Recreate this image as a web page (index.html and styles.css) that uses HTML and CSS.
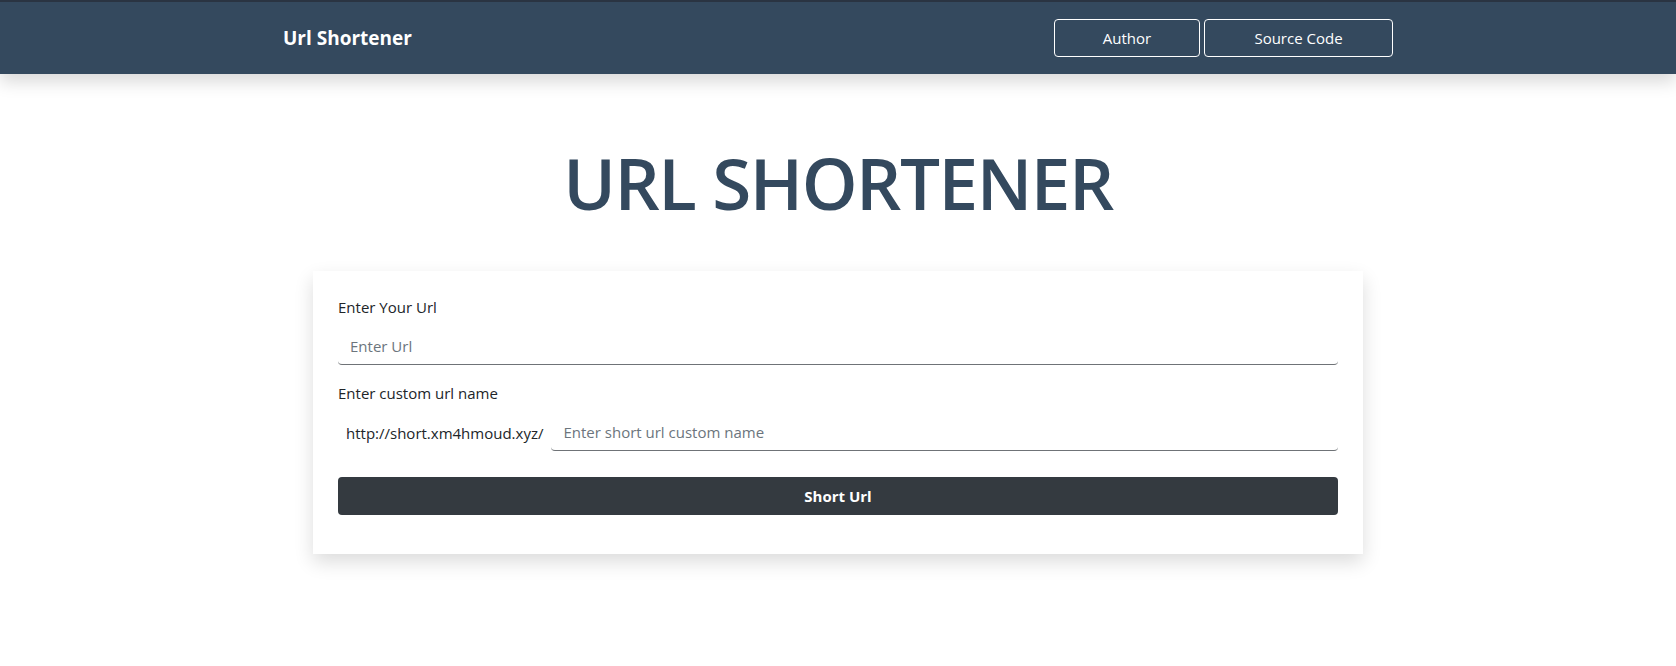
FILE: index.html
```html
<!DOCTYPE html>
<html lang="en">
<head>
<meta charset="utf-8">
<title>Url Shortener</title>
<link rel="stylesheet" href="styles.css">
</head>
<body>
<nav class="navbar">
  <div class="nav-inner">
    <a class="brand" href="#">Url Shortener</a>
    <div class="nav-buttons">
      <a class="nav-btn" href="#">Author</a>
      <a class="nav-btn" href="#">Source Code</a>
    </div>
  </div>
</nav>
<main class="main">
  <h1 class="title">URL SHORTENER</h1>
  <form class="card">
    <div class="form-group">
      <label class="label" for="url">Enter Your Url</label>
      <input class="input" id="url" type="text" placeholder="Enter Url">
    </div>
    <div class="form-group">
      <label class="label" for="custom">Enter custom url name</label>
      <div class="input-group">
        <span class="prefix">http://short.xm4hmoud.xyz/</span>
        <input class="input" id="custom" type="text" placeholder="Enter short url custom name">
      </div>
    </div>
    <button class="submit" type="button">Short Url</button>
  </form>
</main>
</body>
</html>
```
FILE: styles.css
```css
* { box-sizing: border-box; }
html, body { min-height: 100%; }
body {
  margin: 0;
  font-family: "Open Sans", "Noto Sans", sans-serif;
  font-size: 16px;
  line-height: 1.5;
  color: #212529;
  background: #fff;
}
.navbar {
  background: #34495e;
  border-top: 2px solid #2a3442;
  padding: 17px 0;
  box-shadow: 0 0.5rem 1rem rgba(0, 0, 0, 0.15);
  position: relative;
}
.nav-inner {
  max-width: 1110px;
  margin: 0 auto;
  display: flex;
  justify-content: space-between;
  align-items: center;
}
.brand {
  color: #fff;
  text-decoration: none;
  font-weight: 700;
  font-size: 19px;
  line-height: 30px;
}
.nav-buttons {
  display: flex;
  gap: 4px;
}
.nav-btn {
  display: block;
  color: #fff;
  text-decoration: none;
  border: 1px solid #fff;
  border-radius: 4px;
  padding: 6px 0;
  line-height: 24px;
  font-size: 15px;
  text-align: center;
}
.nav-btn:first-child { width: 146px; }
.nav-btn:last-child { width: 189px; }
.main {
  padding: 66px 0 100px;
}
.title {
  margin: 0 0 46px;
  text-align: center;
  font-size: 71px;
  line-height: 1.2;
  font-weight: 600;
  letter-spacing: -1.5px;
  color: #34495e;
}
.card {
  width: 1050px;
  margin: 0 auto;
  padding: 24px 25px 39px;
  background: #fff;
  box-shadow: 0 8px 18px rgba(0, 0, 0, 0.14);
}
.form-group {
  margin-bottom: 16px;
}
.label {
  display: block;
  margin-bottom: 8px;
  font-size: 15px;
  line-height: 24px;
}
.input {
  display: block;
  width: 100%;
  height: 38px;
  padding: 6px 12px;
  border: none;
  border-bottom: 1px solid #6f7377;
  border-radius: 4px;
  font-family: inherit;
  font-size: 15px;
  line-height: 24px;
  color: #495057;
  background: #fff;
  outline: none;
}
.input::placeholder { color: #6c757d; }
.input-group {
  display: flex;
  align-items: stretch;
}
.input-group .input {
  flex: 1;
  width: auto;
}
.prefix {
  padding: 8px 8px 6px;
  font-size: 15px;
  line-height: 24px;
  white-space: nowrap;
}
.submit {
  display: block;
  width: 100%;
  margin-top: 26px;
  height: 38px;
  border: none;
  border-radius: 4px;
  background: #343a40;
  color: #fff;
  font-family: inherit;
  font-weight: 700;
  font-size: 15px;
  line-height: 24px;
}
```
